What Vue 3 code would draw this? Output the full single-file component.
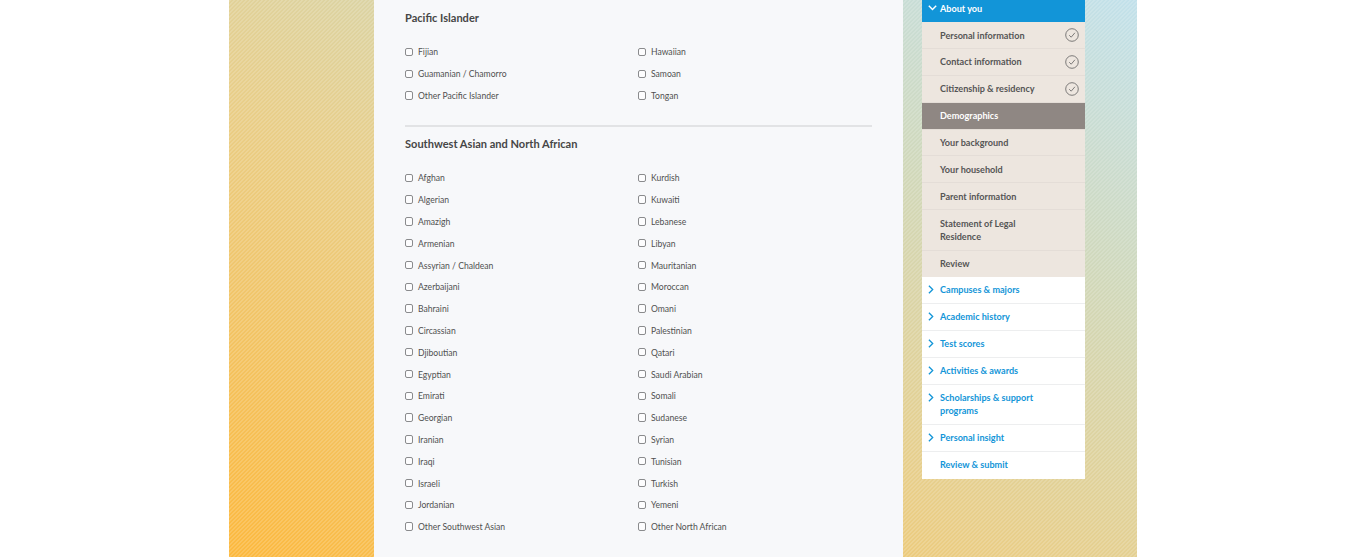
<template>
  <div class="page">
    <div class="shell">
      <main class="form">
        <section v-for="group in groups" :key="group.title" class="group">
          <h3>{{ group.title }}</h3>
          <div class="options">
            <div class="option-col" v-for="(col, i) in group.cols" :key="i">
              <label v-for="name in col" :key="name" class="option">
                <span class="box"></span>
                <span>{{ name }}</span>
              </label>
            </div>
          </div>
        </section>
      </main>

      <aside class="side">
        <div class="current">
          <svg class="chev-down" width="9" height="6" viewBox="0 0 9 6"><path d="M.8.8l3.7 3.8L8.2.8" /></svg>
          About you
        </div>
        <a
          v-for="step in steps"
          :key="step.name"
          class="step"
          :class="{ active: step.active, wide: step.done }"
        >
          <span>{{ step.name }}</span>
          <svg v-if="step.done" class="check" width="14" height="14" viewBox="0 0 14 14">
            <circle cx="7" cy="7" r="6.3" />
            <path d="M4.2 7.2l2 2 3.7-4.4" />
          </svg>
        </a>
        <a v-for="item in sections" :key="item.name" class="section-link">
          <svg v-if="item.arrow" class="chev-right" width="6" height="9" viewBox="0 0 6 9"><path d="M.9.7l3.8 3.8L.9 8.3" /></svg>
          <span>{{ item.name }}</span>
        </a>
      </aside>
    </div>
  </div>
</template>

<script setup>
const groups = [
  {
    title: 'Pacific Islander',
    cols: [
      ['Fijian', 'Guamanian / Chamorro', 'Other Pacific Islander'],
      ['Hawaiian', 'Samoan', 'Tongan']
    ]
  },
  {
    title: 'Southwest Asian and North African',
    cols: [
      ['Afghan', 'Algerian', 'Amazigh', 'Armenian', 'Assyrian / Chaldean', 'Azerbaijani', 'Bahraini', 'Circassian', 'Djiboutian', 'Egyptian', 'Emirati', 'Georgian', 'Iranian', 'Iraqi', 'Israeli', 'Jordanian', 'Other Southwest Asian'],
      ['Kurdish', 'Kuwaiti', 'Lebanese', 'Libyan', 'Mauritanian', 'Moroccan', 'Omani', 'Palestinian', 'Qatari', 'Saudi Arabian', 'Somali', 'Sudanese', 'Syrian', 'Tunisian', 'Turkish', 'Yemeni', 'Other North African']
    ]
  }
]

const steps = [
  { name: 'Personal information', done: true },
  { name: 'Contact information', done: true },
  { name: 'Citizenship & residency', done: true },
  { name: 'Demographics', active: true },
  { name: 'Your background' },
  { name: 'Your household' },
  { name: 'Parent information' },
  { name: 'Statement of Legal Residence' },
  { name: 'Review' }
]

const sections = [
  { name: 'Campuses & majors', arrow: true },
  { name: 'Academic history', arrow: true },
  { name: 'Test scores', arrow: true },
  { name: 'Activities & awards', arrow: true },
  { name: 'Scholarships & support programs', arrow: true },
  { name: 'Personal insight', arrow: true },
  { name: 'Review & submit' }
]
</script>

<style>
html, body {
  margin: 0;
  background: #fff;
  overflow: hidden;
}
</style>

<style scoped>
.page {
  height: 557px;
  display: flex;
  justify-content: center;
  font-family: "Lato", "Open Sans", sans-serif;
}
.shell {
  width: 908px;
  height: 557px;
  padding-left: 145px;
  box-sizing: border-box;
  display: flex;
  align-items: flex-start;
  background:
    linear-gradient(135deg, rgba(255, 255, 255, 0.15) 25%, rgba(255, 255, 255, 0) 25% 50%, rgba(255, 255, 255, 0.15) 50% 75%, rgba(255, 255, 255, 0) 75%) 0 0 / 4px 4px,
    linear-gradient(30deg, #fcb93f 0%, #e9ce88 42%, #d1d8ba 72%, #c2e1eb 100%);
}

/* main form column */
.form {
  width: 529px;
  height: 557px;
  box-sizing: border-box;
  padding: 9.5px 31px 0;
  background: #f7f8fa;
  color: #4a4a4a;
}
.group + .group {
  margin-top: 18.6px;
  padding-top: 9px;
  border-top: 2px solid #e2e3e5;
  width: 467px;
}
h3 {
  margin: 0 0 17px;
  font-size: 11.05px;
  line-height: 15px;
  font-weight: 700;
  color: #464646;
}
.group + .group h3 {
  margin-bottom: 16px;
}
.options {
  display: flex;
}
.option-col {
  width: 233px;
  display: flex;
  flex-direction: column;
}
.option {
  height: 21.8px;
  display: flex;
  align-items: center;
  gap: 4.6px;
  font-size: 8.6px;
  color: #505050;
}
.box {
  width: 6.4px;
  height: 6.4px;
  border: 1px solid #8a8b8d;
  border-radius: 2px;
  background: #fdfdfe;
  margin-top: -1px;
}

/* sidebar nav */
.side {
  width: 163px;
  margin-left: 19px;
  font-size: 9.1px;
  font-weight: 700;
}
.current {
  height: 22px;
  box-sizing: border-box;
  padding: 0 0 5px 18px;
  background: #1295d8;
  color: #fff;
  display: flex;
  align-items: center;
  position: relative;
}
.chev-down {
  position: absolute;
  left: 6px;
  top: 5px;
  fill: none;
  stroke: #fff;
  stroke-width: 1.4;
}
.step {
  display: flex;
  justify-content: space-between;
  align-items: center;
  box-sizing: border-box;
  min-height: 26.9px;
  padding: 6.6px 6px 5.9px 18px;
  line-height: 13.4px;
  background: #ede6df;
  color: #555;
  border-bottom: 1px solid #e4ddd7;
}
.step span {
  max-width: 100px;
}
.step.wide span {
  max-width: none;
}
.step.active {
  background: #8f8783;
  color: #fff;
}
.step:nth-last-child(8) {
  min-height: 26.5px;
  border-bottom: 0;
}
.check {
  margin: -1px 0;
  fill: none;
  stroke: #5f5f5f;
  stroke-width: 0.8;
}
.section-link {
  display: block;
  position: relative;
  box-sizing: border-box;
  min-height: 26.9px;
  padding: 6.25px 40px 6.25px 18px;
  line-height: 13.4px;
  background: #fff;
  color: #1295d8;
  border-bottom: 1px solid #edeeef;
}
.section-link:last-child {
  border-bottom: 0;
}
.chev-right {
  position: absolute;
  left: 6px;
  top: 8px;
  fill: none;
  stroke: #1295d8;
  stroke-width: 1.3;
}
</style>
